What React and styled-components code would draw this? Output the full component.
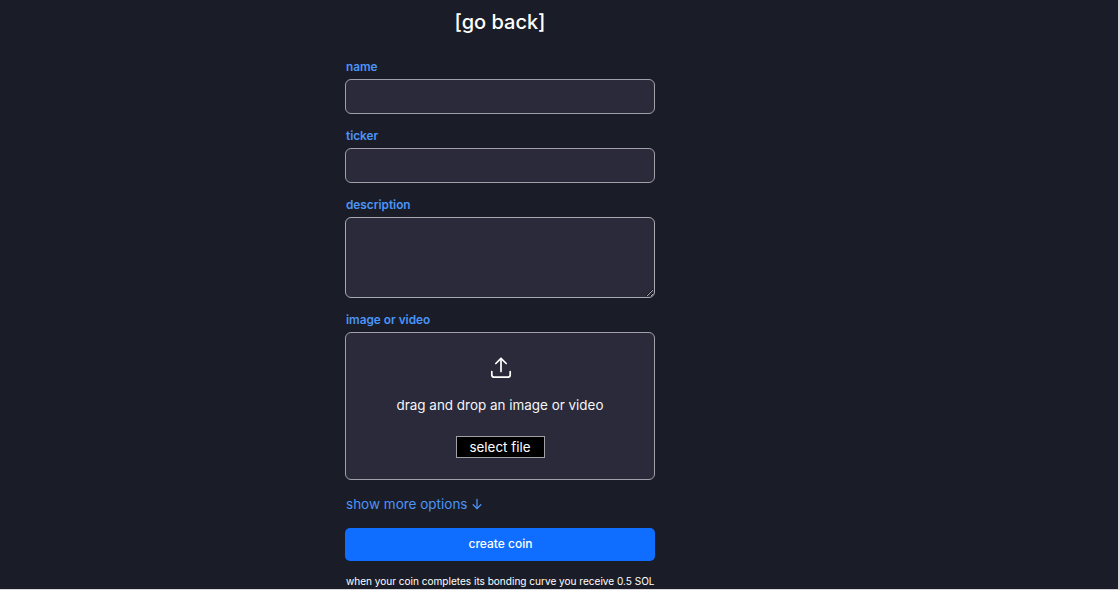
import styled, { createGlobalStyle } from "styled-components";

const GlobalStyle = createGlobalStyle`
  html, body {
    margin: 0;
    padding: 0;
    height: 590px;
    overflow: hidden;
    background: #d9d9dc;
  }
  * { box-sizing: border-box; }
`;

const Page = styled.div`
  width: 1118px;
  height: 589px;
  overflow: hidden;
  background: #1a1d28;
  font-family: Inter, "Liberation Sans", sans-serif;
  color: #fff;
`;

const Column = styled.div`
  width: 1000px;
  display: flex;
  flex-direction: column;
  align-items: center;
`;

const BackLink = styled.a`
  margin-top: 7px;
  font-size: 20px;
  line-height: 30px;
  font-weight: 500;
  color: #fff;
  cursor: pointer;
`;

const Form = styled.form`
  width: 310px;
  margin-top: 22px;
  display: flex;
  flex-direction: column;
  gap: 14px;
`;

const Field = styled.div`
  display: flex;
  flex-direction: column;
  gap: 4px;
`;

const Label = styled.label`
  padding-left: 1px;
  font-size: 11.8px;
  line-height: 16px;
  font-weight: 600;
  color: #4c94f6;
`;

const Input = styled.input`
  display: block;
  width: 100%;
  height: 35px;
  background: #2a2a3b;
  border: 1px solid #a0a0aa;
  border-radius: 6px;
  color: #fff;
`;

const TextArea = styled.textarea`
  display: block;
  width: 100%;
  height: 81px;
  background: #2a2a3b;
  border: 1px solid #a8a8b2;
  border-radius: 6px;
  color: #fff;
`;

const DropZone = styled.div`
  height: 148px;
  background: #2a2a3b;
  border: 1px solid #a0a0aa;
  border-radius: 6px;
  display: flex;
  flex-direction: column;
  align-items: center;
  padding-top: 23px;
`;

const IconSlot = styled.div`
  height: 24px;
  margin-left: 2px;
`;

const DropText = styled.div`
  margin-top: 15px;
  font-size: 13.45px;
  line-height: 20px;
  color: #f6f6f8;
`;

const SelectFile = styled.button`
  margin-top: 21px;
  width: 89px;
  height: 22px;
  padding: 0;
  background: #000;
  border: 1px solid #a0a0a6;
  color: #fff;
  font-family: inherit;
  font-size: 13.4px;
  line-height: 20px;
`;

const ShowMore = styled.div`
  padding-left: 1px;
  display: flex;
  align-items: center;
  gap: 2px;
  font-size: 13.5px;
  line-height: 20px;
  color: #4c94f6;
`;

const CreateButton = styled.button`
  width: 100%;
  height: 33px;
  padding: 0 0 2px 1px;
  background: #0f6dff;
  border: none;
  border-radius: 5px;
  color: #fff;
  font-family: inherit;
  font-size: 12px;
  font-weight: 500;
`;

const Note = styled.p`
  margin: -2px 0 0;
  padding-left: 1px;
  font-size: 10.05px;
  line-height: 16px;
  white-space: nowrap;
  color: #fff;
`;

const UploadIcon = () => (
  <svg width="24" height="24" viewBox="0 0 24 24" fill="none" stroke="#fff" strokeWidth="1.7" strokeLinecap="round" strokeLinejoin="round">
    <path d="M12 15.5V2.5" />
    <path d="M6.8 7.5L12 2.3l5.2 5.2" />
    <path d="M2.8 15.5v3.2a2.5 2.5 0 0 0 2.5 2.5h13.4a2.5 2.5 0 0 0 2.5-2.5v-3.2" />
  </svg>
);

const ArrowDown = () => (
  <svg width="14" height="14" viewBox="0 0 14 14" fill="none" stroke="#4c94f6" strokeWidth="1.3" strokeLinecap="round" strokeLinejoin="round">
    <path d="M7 2.5v9" />
    <path d="M3.2 7.8L7 11.6l3.8-3.8" />
  </svg>
);

export default function App() {
  return (
    <>
      <GlobalStyle />
      <Page>
        <Column>
          <BackLink>[go back]</BackLink>
          <Form>
            <Field>
              <Label>name</Label>
              <Input type="text" />
            </Field>
            <Field>
              <Label>ticker</Label>
              <Input type="text" />
            </Field>
            <Field>
              <Label>description</Label>
              <TextArea />
            </Field>
            <Field>
              <Label>image or video</Label>
              <DropZone>
                <IconSlot>
                  <UploadIcon />
                </IconSlot>
                <DropText>drag and drop an image or video</DropText>
                <SelectFile type="button">select file</SelectFile>
              </DropZone>
            </Field>
            <ShowMore>
              show more options <ArrowDown />
            </ShowMore>
            <CreateButton type="button">create coin</CreateButton>
            <Note>when your coin completes its bonding curve you receive 0.5 SOL</Note>
          </Form>
        </Column>
      </Page>
    </>
  );
}
